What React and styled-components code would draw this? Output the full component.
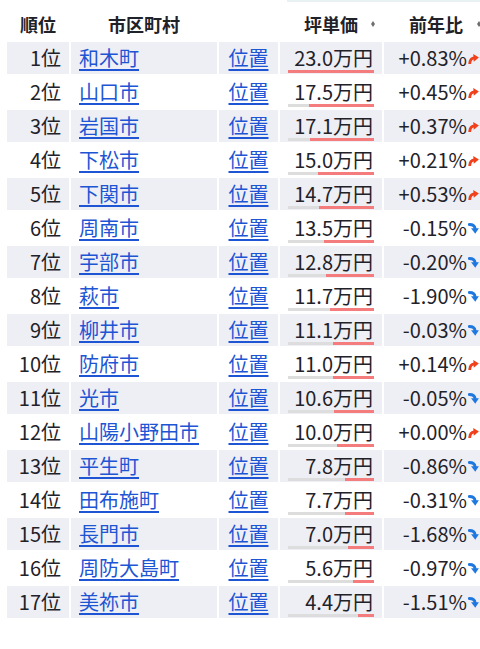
import React from "react";
import styled, { createGlobalStyle } from "styled-components";

const GlobalStyle = createGlobalStyle`
  html, body {
    margin: 0;
    padding: 0;
    background: #fff;
    overflow: hidden;
  }
  body {
    font-family: "Noto Sans CJK JP", "Noto Sans", sans-serif;
    color: #1f2228;
  }
`

const Page = styled.div`
  width: 480px;
  overflow: hidden;
  padding: 0 0 0 5px;
  box-sizing: border-box;
`

const TopStrip = styled.div`
  height: 2px;
  margin-left: 282px;
  background: #e8f2f2;
`

const Table = styled.table`
  margin-top: 4px;
  border-collapse: separate;
  border-spacing: 2px;
  table-layout: fixed;
  width: 483px;
`

const Th = styled.th`
  position: relative;
  height: 32px;
  padding: 0;
  font-size: 18px;
  font-weight: 700;
  text-align: center;
  color: #1f2228;
  line-height: 32px;
  white-space: nowrap;
`

const SortIcon = styled.span`
  position: absolute;
  right: 6px;
  top: 13px;
  width: 5px;
  height: 6px;
  &::before, &::after {
    content: "";
    position: absolute;
    left: 0;
    border-left: 2.5px solid transparent;
    border-right: 2.5px solid transparent;
  }
  &::before {
    top: 0;
    border-bottom: 3px solid #6f6f6f;
  }
  &::after {
    bottom: 0;
    border-top: 3px solid #6f6f6f;
  }
`

const Tr = styled.tr`
  background: ${p => (p.$striped ? "#eeeef5" : "#fff")};
`

const Td = styled.td`
  height: 32px;
  padding: 0 8px;
  font-size: 20px;
  line-height: 32px;
  white-space: nowrap;
  text-align: ${p => p.$align || "left"};
  vertical-align: middle;
`

const PriceCell = styled.td`
  height: 32px;
  padding: 3px 8px 0;
  box-sizing: border-box;
  vertical-align: top;
  font-size: 20px;
`

const Price = styled.div`
  line-height: 25px;
  text-align: right;
  padding-right: 1px;
  white-space: nowrap;
`

const Bar = styled.div`
  height: 2.5px;
  background: #dddddd;
  display: flex;
  justify-content: flex-end;
`

const BarFill = styled.div`
  height: 100%;
  background: #f47c7c;
`

const Link = styled.a`
  color: #1d55d4;
  text-decoration: underline;
  text-underline-offset: 3px;
  text-decoration-thickness: 1.5px;
`

const ChangeCell = styled(Td)`
  padding-right: 9px;
`

const Change = styled.span`
  display: inline-flex;
  align-items: center;
  gap: 1px;
`

const Arrow = ({ up }) =>
  up ? (
    <svg width="11" height="11" viewBox="0 0 10 10">
      <path d="M1.6 9.2 C1.9 6.2 3.4 4.6 6 4.4" stroke="#f0401c" strokeWidth="2.6" fill="none" strokeLinecap="round" />
      <path d="M4.8 0.8 L9.9 4.2 L5.2 8 Z" fill="#f0401c" />
    </svg>
  ) : (
    <svg width="11" height="11" viewBox="0 0 10 10">
      <path d="M1.2 1.4 C4.4 1.4 6.3 3 6.5 5.6" stroke="#1e78e0" strokeWidth="2.6" fill="none" strokeLinecap="round" />
      <path d="M2.8 4.8 L9.9 4.8 L6.6 9.8 Z" fill="#1e78e0" />
    </svg>
  )

const rows = [
  ["和木町", 23.0, "+0.83"],
  ["山口市", 17.5, "+0.45"],
  ["岩国市", 17.1, "+0.37"],
  ["下松市", 15.0, "+0.21"],
  ["下関市", 14.7, "+0.53"],
  ["周南市", 13.5, "-0.15"],
  ["宇部市", 12.8, "-0.20"],
  ["萩市", 11.7, "-1.90"],
  ["柳井市", 11.1, "-0.03"],
  ["防府市", 11.0, "+0.14"],
  ["光市", 10.6, "-0.05"],
  ["山陽小野田市", 10.0, "+0.00"],
  ["平生町", 7.8, "-0.86"],
  ["田布施町", 7.7, "-0.31"],
  ["長門市", 7.0, "-1.68"],
  ["周防大島町", 5.6, "-0.97"],
  ["美祢市", 4.4, "-1.51"],
]

const MAX = 23.0

export default function App() {
  return (
    <Page>
      <GlobalStyle />
      <TopStrip />
      <Table>
        <colgroup>
          <col style={{ width: 62 }} />
          <col style={{ width: 146 }} />
          <col style={{ width: 59 }} />
          <col style={{ width: 102 }} />
          <col style={{ width: 104 }} />
        </colgroup>
        <thead>
          <tr>
            <Th>順位</Th>
            <Th>市区町村</Th>
            <Th></Th>
            <Th>坪単価<SortIcon /></Th>
            <Th>前年比<SortIcon /></Th>
          </tr>
        </thead>
        <tbody>
          {rows.map(([city, price, change], i) => (
            <Tr key={city} $striped={i % 2 === 0}>
              <Td $align="right">{i + 1}位</Td>
              <Td><Link href="#">{city}</Link></Td>
              <Td $align="center"><Link href="#">位置</Link></Td>
              <PriceCell>
                <Price>{price.toFixed(1)}万円</Price>
                <Bar>
                  <BarFill style={{ width: `${(price / MAX) * 100}%` }} />
                </Bar>
              </PriceCell>
              <ChangeCell $align="right">
                <Change>
                  {change}%
                  <Arrow up={change.startsWith("+")} />
                </Change>
              </ChangeCell>
            </Tr>
          ))}
        </tbody>
      </Table>
    </Page>
  )
}
